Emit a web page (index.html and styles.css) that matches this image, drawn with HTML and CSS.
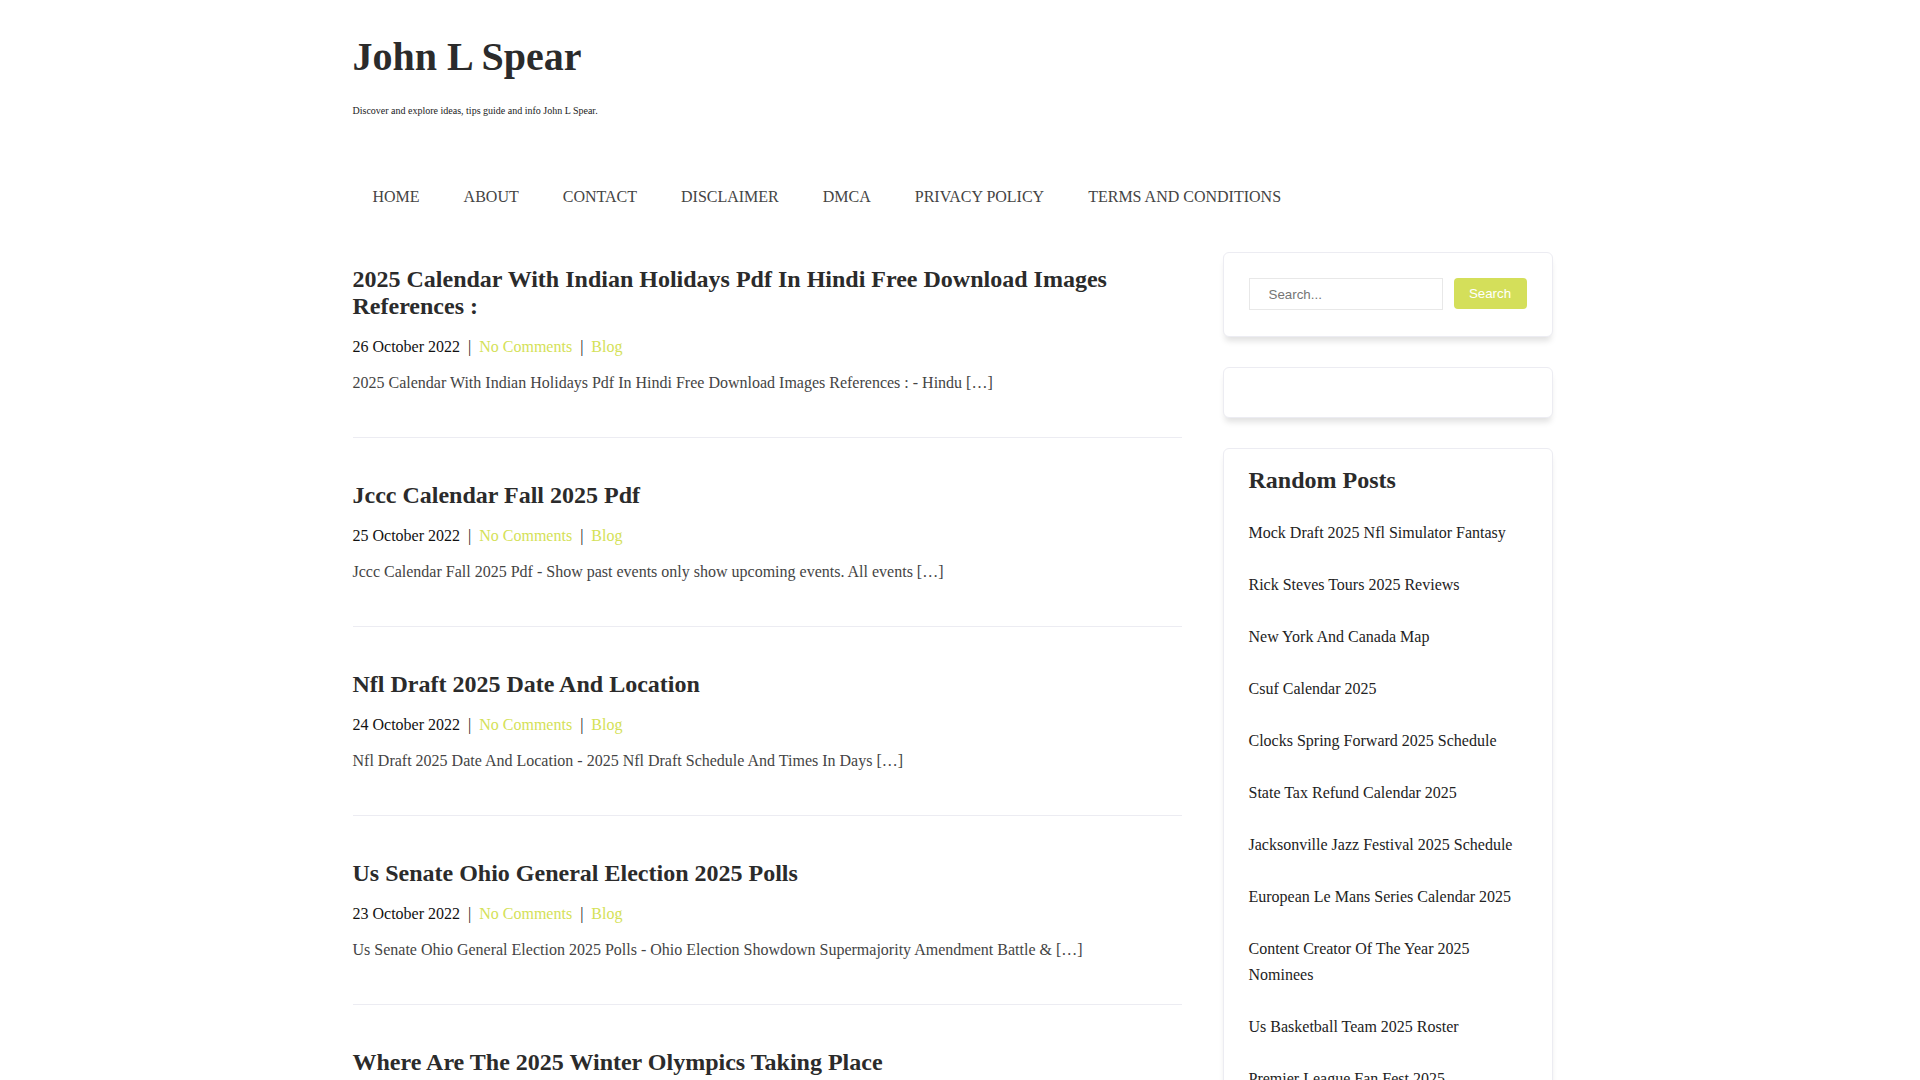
FILE: index.html
```html
<!DOCTYPE html>
<html lang="en">
<head>
<meta charset="utf-8">
<title>John L Spear</title>
<link rel="stylesheet" href="styles.css">
</head>
<body>
<div class="container">
  <header class="site-header">
    <h1 class="site-title">John L Spear</h1>
    <p class="site-desc">Discover and explore ideas, tips guide and info John L Spear.</p>
  </header>
  <nav class="main-nav">
    <a href="#">HOME</a>
    <a href="#">ABOUT</a>
    <a href="#">CONTACT</a>
    <a href="#">DISCLAIMER</a>
    <a href="#">DMCA</a>
    <a href="#">PRIVACY POLICY</a>
    <a href="#">TERMS AND CONDITIONS</a>
  </nav>
  <div class="layout">
    <main class="main">
      <article class="post">
        <h2 class="post-title">2025 Calendar With Indian Holidays Pdf In Hindi Free Download Images References :</h2>
        <div class="meta">26 October 2022 <span class="sep">|</span> <a href="#">No Comments</a> <span class="sep">|</span> <a href="#">Blog</a></div>
        <p class="excerpt">2025 Calendar With Indian Holidays Pdf In Hindi Free Download Images References : - Hindu […]</p>
      </article>
      <article class="post">
        <h2 class="post-title">Jccc Calendar Fall 2025 Pdf</h2>
        <div class="meta">25 October 2022 <span class="sep">|</span> <a href="#">No Comments</a> <span class="sep">|</span> <a href="#">Blog</a></div>
        <p class="excerpt">Jccc Calendar Fall 2025 Pdf - Show past events only show upcoming events. All events […]</p>
      </article>
      <article class="post">
        <h2 class="post-title">Nfl Draft 2025 Date And Location</h2>
        <div class="meta">24 October 2022 <span class="sep">|</span> <a href="#">No Comments</a> <span class="sep">|</span> <a href="#">Blog</a></div>
        <p class="excerpt">Nfl Draft 2025 Date And Location - 2025 Nfl Draft Schedule And Times In Days […]</p>
      </article>
      <article class="post">
        <h2 class="post-title">Us Senate Ohio General Election 2025 Polls</h2>
        <div class="meta">23 October 2022 <span class="sep">|</span> <a href="#">No Comments</a> <span class="sep">|</span> <a href="#">Blog</a></div>
        <p class="excerpt">Us Senate Ohio General Election 2025 Polls - Ohio Election Showdown Supermajority Amendment Battle &amp; […]</p>
      </article>
      <article class="post">
        <h2 class="post-title">Where Are The 2025 Winter Olympics Taking Place</h2>
        <div class="meta">22 October 2022 <span class="sep">|</span> <a href="#">No Comments</a> <span class="sep">|</span> <a href="#">Blog</a></div>
        <p class="excerpt">Where Are The 2025 Winter Olympics Taking Place - Milan Cortina Winter Games Venues […]</p>
      </article>
      <article class="post">
        <h2 class="post-title">Csuf Calendar 2025</h2>
        <div class="meta">21 October 2022 <span class="sep">|</span> <a href="#">No Comments</a> <span class="sep">|</span> <a href="#">Blog</a></div>
        <p class="excerpt">Csuf Calendar 2025 - Academic Calendar Dates And Deadlines […]</p>
      </article>
    </main>
    <aside class="sidebar">
      <section class="widget widget-search">
        <form class="search-form">
          <input class="search-input" type="text" placeholder="Search...">
          <button class="search-btn" type="button">Search</button>
        </form>
      </section>
      <section class="widget widget-empty"></section>
      <section class="widget widget-random">
        <h3 class="widget-title">Random Posts</h3>
        <ul class="random-list">
          <li><a href="#">Mock Draft 2025 Nfl Simulator Fantasy</a></li>
          <li><a href="#">Rick Steves Tours 2025 Reviews</a></li>
          <li><a href="#">New York And Canada Map</a></li>
          <li><a href="#">Csuf Calendar 2025</a></li>
          <li><a href="#">Clocks Spring Forward 2025 Schedule</a></li>
          <li><a href="#">State Tax Refund Calendar 2025</a></li>
          <li><a href="#">Jacksonville Jazz Festival 2025 Schedule</a></li>
          <li><a href="#">European Le Mans Series Calendar 2025</a></li>
          <li><a href="#">Content Creator Of The Year 2025 Nominees</a></li>
          <li><a href="#">Us Basketball Team 2025 Roster</a></li>
          <li><a href="#">Premier League Fan Fest 2025</a></li>
          <li><a href="#">Jccc Calendar Fall 2025 Pdf</a></li>
        </ul>
      </section>
    </aside>
  </div>
</div>
</body>
</html>
```
FILE: styles.css
```css
html, body {
  margin: 0;
  padding: 0;
  background: #ffffff;
}
body {
  font-family: "Liberation Serif", "Times New Roman", serif;
  font-size: 16px;
  color: #222222;
  padding-right: 15px;
}
a {
  text-decoration: none;
}
.container {
  width: 1200px;
  margin: 0 auto;
}
.site-header {
  padding-top: 33px;
}
.site-title {
  margin: 0;
  font-size: 40px;
  line-height: 48px;
  font-weight: bold;
  color: #2b2b2b;
}
.site-desc {
  margin: 23px 0 0;
  font-size: 10px;
  line-height: 14px;
  color: #222222;
}
.main-nav {
  display: flex;
  gap: 44px;
  margin-top: 67px;
  padding-left: 20px;
}
.main-nav a {
  font-size: 16px;
  line-height: 24px;
  color: #444444;
}
.layout {
  display: flex;
  justify-content: space-between;
  align-items: flex-start;
  margin-top: 43px;
}
.main {
  width: 829px;
  padding-top: 14px;
}
.post {
  padding: 44px 0 42.5px;
  border-bottom: 1px solid #ececf2;
}
.post:first-child {
  padding-top: 0;
}
.post-title {
  margin: 0;
  font-size: 24px;
  line-height: 27px;
  font-weight: bold;
  color: #2b2b2b;
}
.meta {
  margin-top: 15px;
  line-height: 24px;
  color: #111111;
}
.meta a {
  color: #d4e157;
}
.sep {
  margin: 0 4px;
  color: #222222;
}
.excerpt {
  margin: 11.5px 0 0;
  line-height: 24px;
  color: #444444;
}
.sidebar {
  width: 330px;
}
.widget {
  border: 1px solid #ececf2;
  border-radius: 6px;
  box-shadow: 0 6px 6px -2px rgba(0, 0, 0, 0.12);
  background: #ffffff;
  margin-bottom: 30px;
}
.widget-search {
  padding: 25px 25px 26px 25px;
}
.search-form {
  display: flex;
  align-items: flex-start;
  gap: 11px;
  margin: 0;
}
.search-input {
  flex: 1;
  min-width: 0;
  height: 32px;
  box-sizing: border-box;
  border: 1px solid #e8e8e8;
  padding: 0 19px;
  font-family: "Liberation Sans", Arial, sans-serif;
  font-size: 13.33px;
  color: #333333;
  outline: none;
}
.search-input::placeholder {
  color: #757575;
}
.search-btn {
  width: 73px;
  height: 31px;
  border: none;
  border-radius: 4px;
  background: #d4df5a;
  color: #ffffff;
  font-family: "Liberation Sans", Arial, sans-serif;
  font-size: 13.33px;
  padding: 0;
}
.widget-empty {
  height: 51px;
  box-sizing: border-box;
}
.widget-random {
  padding: 16px 25px 10px;
}
.widget-title {
  margin: 0 0 25px;
  font-size: 24px;
  line-height: 30px;
  font-weight: bold;
  color: #2b2b2b;
}
.random-list {
  list-style: none;
  margin: 0;
  padding: 0;
}
.random-list li {
  line-height: 26px;
  padding-bottom: 26px;
}
.random-list a {
  color: #222222;
}
```
